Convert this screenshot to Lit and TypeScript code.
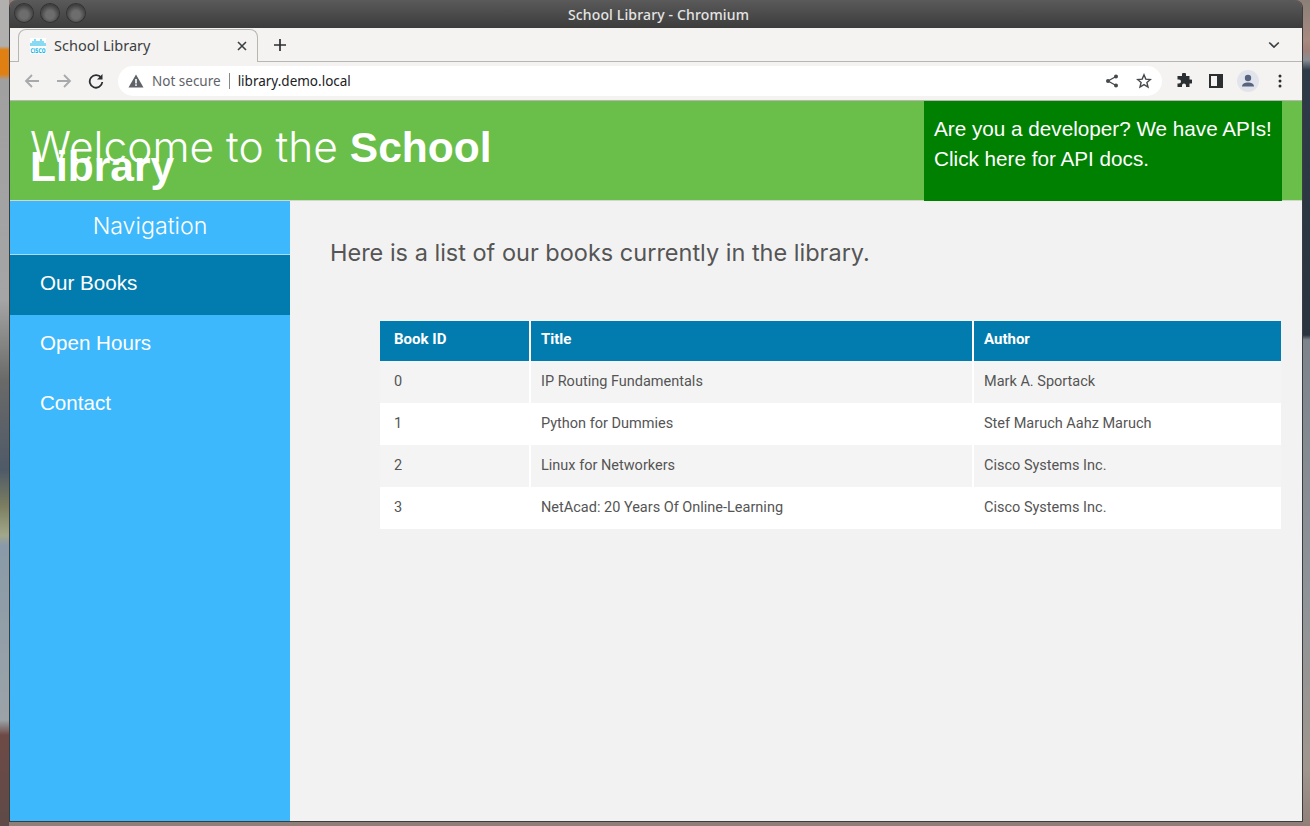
import { LitElement, html, css } from "lit";
import { customElement } from "lit/decorators.js";

const books = [
  { id: 0, title: "IP Routing Fundamentals", author: "Mark A. Sportack" },
  { id: 1, title: "Python for Dummies", author: "Stef Maruch Aahz Maruch" },
  { id: 2, title: "Linux for Networkers", author: "Cisco Systems Inc." },
  { id: 3, title: "NetAcad: 20 Years Of Online-Learning", author: "Cisco Systems Inc." },
];

@customElement("app-root")
export class AppRoot extends LitElement {
  render() {
    return html`
      <div class="window">
        <div class="titlebar">
          <div class="lights"><i></i><i></i><i></i></div>
          <span class="wintitle">School Library - Chromium</span>
        </div>
        <div class="tabstrip">
          <div class="tab">
            <svg class="favicon" width="16" height="16" viewBox="0 0 16 16">
              <rect width="16" height="16" fill="#fff"></rect>
              <g fill="#12b4e6">
                <rect x="0.500" y="5" width="1" height="3"></rect>
                <rect x="2.500" y="3" width="1" height="5"></rect>
                <rect x="4.500" y="1" width="1" height="7"></rect>
                <rect x="6.500" y="3" width="1" height="5"></rect>
                <rect x="8.500" y="3" width="1" height="5"></rect>
                <rect x="10.500" y="1" width="1" height="7"></rect>
                <rect x="12.500" y="3" width="1" height="5"></rect>
                <rect x="14.500" y="5" width="1" height="3"></rect>
              </g>
              <text x="8" y="14.500" text-anchor="middle" font-size="6.500" font-weight="700" font-family="DejaVu Sans" fill="#12b4e6" textLength="15" lengthAdjust="spacingAndGlyphs">CISCO</text>
            </svg>
            <span class="tabtitle">School Library</span>
            <svg class="close" width="10" height="10" viewBox="0 0 10 10"><path d="M1 1l8 8M9 1l-8 8" stroke="#3c4043" stroke-width="1.600"></path></svg>
          </div>
          <svg class="plus" width="12" height="12" viewBox="0 0 12 12"><path d="M6 0v12M0 6h12" stroke="#2b2f31" stroke-width="1.700"></path></svg>
          <svg class="chev" width="12" height="8" viewBox="0 0 12 8"><path d="M1.200 1.500L6 6l4.800-4.500" fill="none" stroke="#3c4043" stroke-width="1.700"></path></svg>
        </div>
        <div class="toolbar">
          <svg class="nav" width="16" height="16" viewBox="0 0 16 16"><path d="M15 8H2M8 2L2 8l6 6" fill="none" stroke="#a7a9ab" stroke-width="1.800"></path></svg>
          <svg class="nav" width="16" height="16" viewBox="0 0 16 16"><path d="M1 8h13M8 2l6 6-6 6" fill="none" stroke="#a7a9ab" stroke-width="1.800"></path></svg>
          <svg class="nav" width="16" height="16" viewBox="0 0 16 16"><path d="M13.200 4.800A6.300 6.300 0 1 0 14.300 9" fill="none" stroke="#2b2f31" stroke-width="1.800"></path><path d="M14.500 1v5.500H9z" fill="#2b2f31"></path></svg>
          <div class="omnibox">
            <svg width="16" height="14" viewBox="0 0 16 14"><path d="M8 0.500L15.500 13.500H0.500z" fill="#5f6368"></path><rect x="7.200" y="5" width="1.600" height="4.500" fill="#fff"></rect><rect x="7.200" y="10.300" width="1.600" height="1.600" fill="#fff"></rect></svg>
            <span class="insecure">Not secure</span>
            <span class="sep"></span>
            <span class="url">library.demo.local</span>
            <span class="grow"></span>
            <svg width="14" height="14" viewBox="0 0 14 14"><path d="M11 2.500L3 7l8 4.500" fill="none" stroke="#45494c" stroke-width="1.300"></path><circle cx="11" cy="2.500" r="2" fill="#45494c"></circle><circle cx="3" cy="7" r="2" fill="#45494c"></circle><circle cx="11" cy="11.500" r="2" fill="#45494c"></circle></svg>
            <svg class="star" width="16" height="16" viewBox="0 0 16 16"><path d="M8 1.800l1.800 4.300 4.600.4-3.500 3 1.100 4.500L8 11.600 4 14l1.100-4.500-3.500-3 4.600-.4z" fill="none" stroke="#45494c" stroke-width="1.400"></path></svg>
          </div>
          <svg class="puzzle" width="16" height="16" viewBox="0 0 16 16"><path d="M6 1.500a2 2 0 0 1 4 0V3h3.500v3.500H15a2 2 0 0 1 0 4h-1.500V14H10v-1.500a2 2 0 0 0-4 0V14H1.500v-3.500H3a2 2 0 0 0 0-4H1.500V3H6z" fill="#2b2f31"></path></svg>
          <svg class="side" width="14" height="14" viewBox="0 0 14 14"><path fill-rule="evenodd" d="M0 0h14v14H0zM2 2v10h6V2z" fill="#2b2f31"></path></svg>
          <div class="avatar">
            <svg width="22" height="22" viewBox="0 0 22 22"><circle cx="11" cy="11" r="11" fill="#e1e4ea"></circle><circle cx="11" cy="8" r="3.200" fill="#56647f"></circle><path d="M5 16.500c0-2.600 2.800-4 6-4s6 1.400 6 4z" fill="#56647f"></path></svg>
          </div>
          <svg class="dots" width="4" height="14" viewBox="0 0 4 14"><circle cx="2" cy="2" r="1.500" fill="#2b2f31"></circle><circle cx="2" cy="7" r="1.500" fill="#2b2f31"></circle><circle cx="2" cy="12" r="1.500" fill="#2b2f31"></circle></svg>
        </div>
        <div class="page">
          <header>
            <h1>Welcome to the <b>School Library</b></h1>
            <a class="apis">Are you a developer? We have APIs!<br />Click here for API docs.</a>
          </header>
          <div class="body">
            <nav>
              <div class="navhead">Navigation</div>
              <a class="active">Our Books</a>
              <a>Open Hours</a>
              <a>Contact</a>
            </nav>
            <main>
              <p>Here is a list of our books currently in the library.</p>
              <table>
                <thead>
                  <tr><th class="c1">Book ID</th><th class="c2">Title</th><th>Author</th></tr>
                </thead>
                <tbody>
                  ${books.map(
                    (b) => html`<tr><td>${b.id}</td><td>${b.title}</td><td>${b.author}</td></tr>`
                  )}
                </tbody>
              </table>
            </main>
          </div>
        </div>
      </div>
    `;
  }

  static styles = css`
    :host {
      display: block;
      height: 826px;
      box-sizing: border-box;
      padding: 0 7px 5px 9px;
      overflow: hidden;
      /* desktop wallpaper showing round the window */
      background:
        linear-gradient(180deg, #8a8078 0, #a88a80 40px, #a08078 50px, #8a8e94 60px, #2f3a48 70px, #2a3440 335px, #7d848c 340px, #8f9498 600px, #a0968e 770px, #8f7f78 826px) right top / 7px 100% no-repeat,
        linear-gradient(180deg, #b2b0ae 0, #b2b0ae 46px, #e07f12 50px, #e07f12 74px, #a0a0a0 80px, #a5a5a5 300px, #6a6a68 380px, #4f5a68 470px, #7a7d60 505px, #a3a78a 535px, #8a9aa8 545px, #9ba3a8 720px, #6e4a46 735px, #5e4a48 826px) left top / 9px 100% no-repeat,
        #8f7f78;
    }

    .window {
      height: 100%;
      display: flex;
      flex-direction: column;
      border: solid #3a3c3e;
      border-width: 0 1px 1px 1px;
      border-radius: 8px 8px 0 0;
      overflow: hidden;
      font-family: "Noto Sans", sans-serif;
    }

    .titlebar {
      height: 28px;
      flex: none;
      position: relative;
      display: flex;
      align-items: center;
      justify-content: center;
      padding-left: 5px;
      background: linear-gradient(180deg, #5a5a5a, #3c3c3c);
    }

    .lights {
      position: absolute;
      left: 5px;
      top: 4px;
      display: flex;
      gap: 8px;
    }

    .lights i {
      width: 18px;
      height: 18px;
      border-radius: 50%;
      background: radial-gradient(circle at 50% 60%, #6d6d6d 30%, #3a3a3a 75%);
      box-shadow: 0 0 0 1px #323232;
    }

    .wintitle {
      color: #e4e4e4;
      font-size: 14px;
      font-weight: 500;
      letter-spacing: 0.150px;
    }

    .tabstrip {
      height: 33px;
      flex: none;
      display: flex;
      align-items: center;
      background: #f4f3f1;
      border-bottom: 1px solid #b8b6b3;
      padding-left: 8px;
      padding-right: 22px;
    }

    .tab {
      width: 240px;
      height: 33px;
      box-sizing: border-box;
      margin-bottom: -1px;
      display: flex;
      align-items: center;
      padding: 0 10px 0 11px;
      border: 1px solid #b8b6b3;
      border-bottom: none;
      border-radius: 8px 8px 0 0;
      background: #f4f3f1;
    }

    .favicon {
      flex: none;
    }

    .tabtitle {
      margin: 0 0 2px 8px;
      flex: 1;
      font-size: 14.500px;
      color: #3c4043;
    }

    .plus {
      margin-left: 16px;
    }

    .chev {
      margin-left: auto;
    }

    .toolbar {
      height: 38px;
      flex: none;
      display: flex;
      align-items: center;
      background: #f4f3f1;
      padding: 0 16px 0 14px;
      border-bottom: 1px solid #b8b6b3;
    }

    .nav {
      margin-right: 16px;
    }

    .nav:nth-child(3) {
      margin-right: 14px;
    }

    .omnibox {
      width: 1044px;
      height: 30px;
      box-sizing: border-box;
      flex: none;
      display: flex;
      align-items: center;
      padding: 0 10px;
      border-radius: 15px;
      background: #fff;
      font-size: 13.500px;
    }

    .insecure {
      margin-left: 8px;
      color: #5f6368;
    }

    .sep {
      width: 1px;
      height: 16px;
      margin: 0 8px;
      background: #888;
    }

    .url {
      color: #202124;
    }

    .grow {
      flex: 1;
    }

    .star {
      margin-left: 17px;
    }

    .puzzle {
      margin-left: 14px;
    }

    .side {
      margin-left: 17px;
    }

    .avatar {
      width: 22px;
      height: 22px;
      margin-left: 14px;
    }

    .dots {
      margin-left: 19px;
    }

    .page {
      flex: 1;
      min-height: 0;
      display: flex;
      flex-direction: column;
      background: #f2f2f2;
      font-family: Inter, "Liberation Sans", sans-serif;
    }

    header {
      height: 100px;
      flex: none;
      display: flex;
      justify-content: space-between;
      background: #6abf4b;
      box-shadow: inset 0 -1px #cfd8cb;
      padding-right: 20px;
    }

    h1 {
      width: 500px;
      margin: 0;
      padding: 37px 0 0 20px;
      color: #fff;
      font-size: 42.500px;
      font-weight: 300;
      line-height: 18px;
    }

    h1 b {
      font-family: "Liberation Sans", sans-serif;
      font-weight: 700;
    }

    .apis {
      width: 358px;
      box-sizing: border-box;
      padding: 13px 10px 0;
      background: #008000;
      color: #fff;
      font-family: "Liberation Sans", sans-serif;
      font-size: 20.700px;
      line-height: 30px;
    }

    .body {
      flex: 1;
      min-height: 0;
      display: flex;
    }

    nav {
      width: 280px;
      flex: none;
      background: #3db8fc;
      color: #fff;
    }

    .navhead {
      height: 54px;
      box-sizing: border-box;
      border-bottom: 1px solid #a9dcf8;
      text-align: center;
      font-size: 23.200px;
      font-weight: 300;
      line-height: 50px;
    }

    nav a {
      display: block;
      height: 60px;
      padding-left: 30px;
      font-family: "Liberation Sans", sans-serif;
      font-size: 20.600px;
      line-height: 55px;
    }

    nav a.active {
      background: #027cae;
    }

    main {
      flex: 1;
      min-width: 0;
      padding: 0 20px 0 40px;
    }

    main p {
      margin: 37px 0 0;
      color: #555;
      font-size: 23.500px;
      font-weight: 400;
      line-height: 30px;
    }

    table {
      width: 901px;
      margin: 53px 0 0 50px;
      border-collapse: collapse;
      table-layout: fixed;
      font-family: Roboto, sans-serif;
      font-size: 14.500px;
    }

    th {
      height: 40px;
      box-sizing: border-box;
      padding: 0 10px 4px 14px;
      text-align: left;
      color: #fff;
      font-size: 15px;
      font-weight: 700;
      background: #027cae;
      border-right: 2px solid #fff;
    }

    th + th {
      padding-left: 10px;
    }

    th:last-child,
    td:last-child {
      border-right: none;
    }

    th.c1 {
      width: 150px;
    }

    th.c2 {
      width: 443px;
    }

    td {
      height: 42px;
      box-sizing: border-box;
      padding: 0 10px 2px 14px;
      color: #555;
      background: #fff;
      border-right: 2px solid #fff;
    }

    td + td {
      padding-left: 10px;
    }

    tbody tr:nth-child(odd) td {
      background: #f4f4f4;
    }
  `;
}
